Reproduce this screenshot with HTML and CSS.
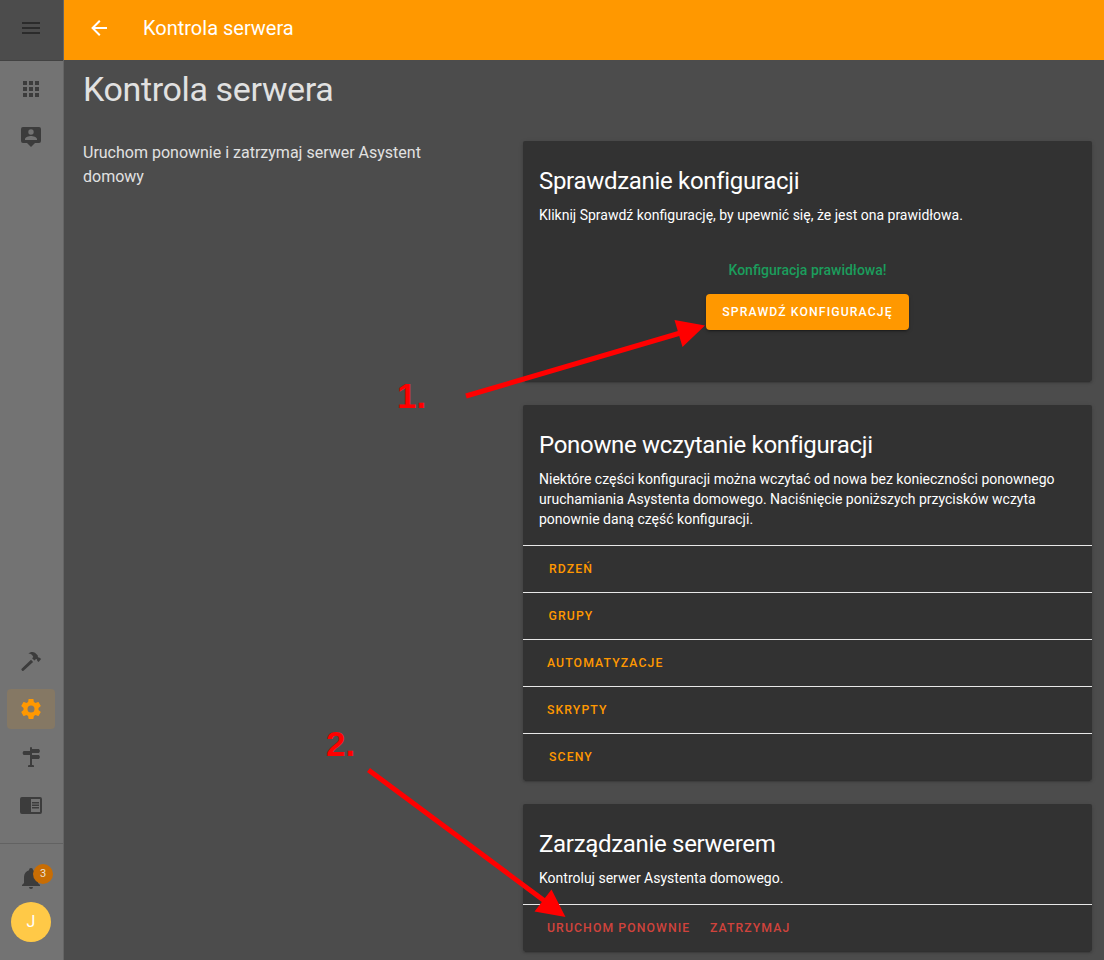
FILE: index.html
```html
<!DOCTYPE html>
<html lang="pl">
<head>
<meta charset="utf-8">
<title>Kontrola serwera</title>
<link rel="stylesheet" href="styles.css">
</head>
<body>
<div class="app">
  <aside class="sidebar">
    <div class="menu"><svg class="icon" viewBox="0 0 24 24"><path d="M3,6H21V8H3V6M3,11H21V13H3V11M3,16H21V18H3V16Z"/></svg></div>
    <nav class="nav">
      <a class="item"><svg class="icon" viewBox="0 0 24 24"><path d="M16,20H20V16H16M16,14H20V10H16M10,8H14V4H10M16,8H20V4H16M10,14H14V10H10M4,14H8V10H4M4,20H8V16H4M10,20H14V16H10M4,8H8V4H4V8Z"/></svg></a>
      <a class="item"><svg class="icon" viewBox="0 0 24 24"><path fill-rule="evenodd" d="M20,2A2,2 0 0,1 22,4V16A2,2 0 0,1 20,18H16L12,22L8,18H4A2,2 0 0,1 2,16V4A2,2 0 0,1 4,2H20M12,4.3A2.7,2.7 0 0,0 9.3,7A2.7,2.7 0 0,0 12,9.7A2.7,2.7 0 0,0 14.7,7A2.7,2.7 0 0,0 12,4.3M18,15V14.1C18,12.1 14,11 12,11C10,11 6,12.1 6,14.1V15H18Z"/></svg></a>
      <span class="spacer"></span>
      <a class="item"><svg class="icon" viewBox="0 0 24 24"><path d="M2.6,19.8L12,10.8L14.1,12.9L4.5,21.8A1,1 0 0,1 3.2,21.8L2.6,21.1A1,1 0 0,1 2.6,19.8ZM9.3,4.5C11,2.9 14,2.4 16,3.8L18.6,6.2C19,6.8 18.7,7.6 19,8.2C19.6,8.8 20.4,8.3 21,8.9L22.1,10L19.6,13L18.4,12C17.9,11.4 18.4,10.7 17.8,10.2C17.2,9.8 16.6,10.3 16,10.9L15.4,11.5L13.1,9.3L14.3,8C13.7,6 12,4.7 9.3,4.5Z"/></svg></a>
      <a class="item active"><svg class="icon" viewBox="0 0 24 24"><path d="M12,15.5A3.5,3.5 0 0,1 8.5,12A3.5,3.5 0 0,1 12,8.5A3.5,3.5 0 0,1 15.5,12A3.5,3.5 0 0,1 12,15.5M19.43,12.97C19.47,12.65 19.5,12.33 19.5,12C19.5,11.67 19.47,11.34 19.43,11L21.54,9.37C21.73,9.22 21.78,8.95 21.66,8.73L19.66,5.27C19.54,5.05 19.27,4.96 19.05,5.05L16.56,6.05C16.04,5.66 15.5,5.32 14.87,5.07L14.5,2.42C14.46,2.18 14.25,2 14,2H10C9.75,2 9.54,2.18 9.5,2.42L9.13,5.07C8.5,5.32 7.96,5.66 7.44,6.05L4.95,5.05C4.73,4.96 4.46,5.05 4.34,5.27L2.34,8.73C2.21,8.95 2.27,9.22 2.46,9.37L4.57,11C4.53,11.34 4.5,11.67 4.5,12C4.5,12.33 4.53,12.65 4.57,12.97L2.46,14.63C2.27,14.78 2.21,15.05 2.34,15.27L4.34,18.73C4.46,18.95 4.73,19.03 4.95,18.95L7.44,17.94C7.96,18.34 8.5,18.68 9.13,18.93L9.5,21.58C9.54,21.82 9.75,22 10,22H14C14.25,22 14.46,21.82 14.5,21.58L14.87,18.93C15.5,18.67 16.04,18.34 16.56,17.94L19.05,18.95C19.27,19.03 19.54,18.95 19.66,18.73L21.66,15.27C21.78,15.05 21.73,14.78 21.54,14.63L19.43,12.97Z"/></svg></a>
      <a class="item"><svg class="icon" viewBox="0 0 24 24"><path d="M11,3A1,1 0 0,1 13,3V4H20L21,6L20,8H13V10H20L21,12L20,14H13V20H14A1,1 0 0,1 15,21V22H9V21A1,1 0 0,1 10,20H11V10H4.5L3.5,8L4.5,6H11Z"/></svg></a>
      <a class="item"><svg class="icon" viewBox="0 0 24 24"><path fill-rule="evenodd" d="M3,4H21A2,2 0 0,1 23,6V19A2,2 0 0,1 21,21H3A2,2 0 0,1 1,19V6A2,2 0 0,1 3,4M12,6V19H21V6ZM13,9H20V10.5H13ZM13,11.5H20V13H13ZM13,14H20V15.5H13Z"/></svg></a>
    </nav>
    <div class="account">
      <div class="bell"><svg class="icon" viewBox="0 0 24 24"><path d="M21,19V20H3V19L5,17V11C5,7.9 7.03,5.17 10,4.29V4A2,2 0 0,1 14,4V4.29C16.97,5.17 19,7.9 19,11V17L21,19M14,21A2,2 0 0,1 12,23A2,2 0 0,1 10,21"/></svg><span class="badge">3</span></div>
      <div class="avatar">J</div>
    </div>
  </aside>
  <div class="page">
    <header class="toolbar"><svg class="icon back" viewBox="0 0 24 24"><path d="M20,11V13H8L13.5,18.5L12.08,19.92L4.16,12L12.08,4.08L13.5,5.5L8,11H20Z"/></svg><span>Kontrola serwera</span></header>
    <main class="content">
      <h1>Kontrola serwera</h1>
      <div class="columns">
        <p class="intro">Uruchom ponownie i zatrzymaj serwer Asystent domowy</p>
        <div class="cards">
          <section class="card">
            <h2>Sprawdzanie konfiguracji</h2>
            <p>Kliknij Sprawdź konfigurację, by upewnić się, że jest ona prawidłowa.</p>
            <div class="validate"><span class="valid">Konfiguracja prawidłowa!</span><button class="btn raised">Sprawdź konfigurację</button></div>
          </section>
          <section class="card">
            <h2>Ponowne wczytanie konfiguracji</h2>
            <p>Niektóre części konfiguracji można wczytać od nowa bez konieczności ponownego uruchamiania Asystenta domowego. Naciśnięcie poniższych przycisków wczyta ponownie daną część konfiguracji.</p>
            <div class="actions"><button class="btn">Rdzeń</button></div>
            <div class="actions"><button class="btn">Grupy</button></div>
            <div class="actions"><button class="btn">Automatyzacje</button></div>
            <div class="actions"><button class="btn">Skrypty</button></div>
            <div class="actions"><button class="btn">Sceny</button></div>
          </section>
          <section class="card">
            <h2>Zarządzanie serwerem</h2>
            <p>Kontroluj serwer Asystenta domowego.</p>
            <div class="actions"><button class="btn warning">Uruchom ponownie</button><button class="btn warning">Zatrzymaj</button></div>
          </section>
        </div>
      </div>
    </main>
  </div>
  <svg class="annotations" viewBox="0 0 1104 960">
    <path class="shaft" d="M466,396L682,332.5M368.5,770L546,902"/>
    <path d="M705,325.5L674.5,320L682.5,347ZM565.5,917L551.5,889.5L534.5,911.5Z"/>
    <text x="397" y="407.5">1.</text>
    <text x="326" y="756">2.</text>
  </svg>
</div>
</body>
</html>
```
FILE: styles.css
```css
* { box-sizing: border-box; }
body { margin: 0; font-family: Roboto, sans-serif; background: #4c4c4c; color: #fff; }
h1, h2, p { margin: 0; font-weight: 400; }
.app { position: relative; display: flex; width: 1104px; height: 960px; overflow: hidden; }
.icon { display: block; width: 24px; height: 24px; fill: currentColor; }

.sidebar { display: flex; flex-direction: column; width: 64px; flex: none; background: #737373; border-right: 1px solid #656565; color: #3c3c3c; }
.menu { height: 61px; flex: none; padding: 16px 19px; background: #4c4c4c; border-bottom: 1px solid #424242; color: #2b2b2b; }
.nav { display: flex; flex-direction: column; align-items: center; flex: 1; gap: 8px; padding: 8px 1px 18px 0; }
.item { display: flex; align-items: center; justify-content: center; width: 48px; height: 40px; border-radius: 4px; }
.item.active { background: #857864; color: #ff9800; }
.spacer { flex: 1; }
.account { display: flex; flex-direction: column; height: 117px; padding: 22px 11px 0; border-top: 1px solid #626262; }
.bell { position: relative; height: 36px; padding-left: 8px; }
.badge { position: absolute; left: 22px; top: -2px; width: 20px; height: 20px; border-radius: 50%; background: #c86d04; color: #e9e2d9; font-size: 11px; line-height: 20px; text-align: center; }
.avatar { width: 40px; height: 40px; border-radius: 50%; background: #ffc947; color: #fff; font-size: 16px; line-height: 40px; text-align: center; }

.page { flex: 1; min-width: 0; }
.toolbar { display: flex; align-items: center; gap: 32px; height: 60px; padding: 0 23px 4px; background: #ff9800; font-size: 20px; }
.content { padding: 9px 12px 0 19px; }
h1 { font-size: 34px; line-height: 40px; letter-spacing: -0.37px; color: #e1e1e1; }
.columns { display: flex; justify-content: space-between; padding-top: 32px; }
.intro { width: 360px; font-size: 16px; line-height: 24px; color: #e1e1e1; }
.cards { display: flex; flex-direction: column; gap: 24px; width: 569px; }
.card { border-radius: 2px; background: #323232; box-shadow: 0 2px 2px rgba(0,0,0,.14), 0 1px 5px rgba(0,0,0,.12), 0 3px 1px -2px rgba(0,0,0,.2); }
.card h2 { padding: 20px 16px 0; font-size: 24px; line-height: 40px; letter-spacing: -0.31px; }
.card p { padding: 4px 16px 16px; font-size: 14px; line-height: 20px; }
.validate { display: flex; flex-direction: column; align-items: center; height: 140px; padding-top: 18px; }
.valid { margin-bottom: 13px; font-size: 14px; font-weight: 500; line-height: 22px; color: #1b9d5c; }
.actions { display: flex; gap: 3.6px; height: 47px; padding: 5px 16px; border-top: 1px solid #e8e8e8; }
.btn { min-width: 64px; height: 36px; padding: 0 8px; border: 0; border-radius: 4px; background: transparent; color: #ff9800; font: 500 12.25px/36px Roboto, sans-serif; letter-spacing: 1.09px; text-transform: uppercase; }
.btn.warning { color: #d0433c; }
.btn.raised { padding: 0 16px; background: #ff9800; color: #fff; box-shadow: 0 3px 1px -2px rgba(0,0,0,.2), 0 2px 2px rgba(0,0,0,.14), 0 1px 5px rgba(0,0,0,.12); }

.annotations { position: absolute; inset: 0; width: 1104px; height: 960px; fill: #f00; pointer-events: none; }
.annotations .shaft { fill: none; stroke: #f00; stroke-width: 5; }
.annotations text { font: 700 35px "Liberation Sans", Arial, sans-serif; }
```
